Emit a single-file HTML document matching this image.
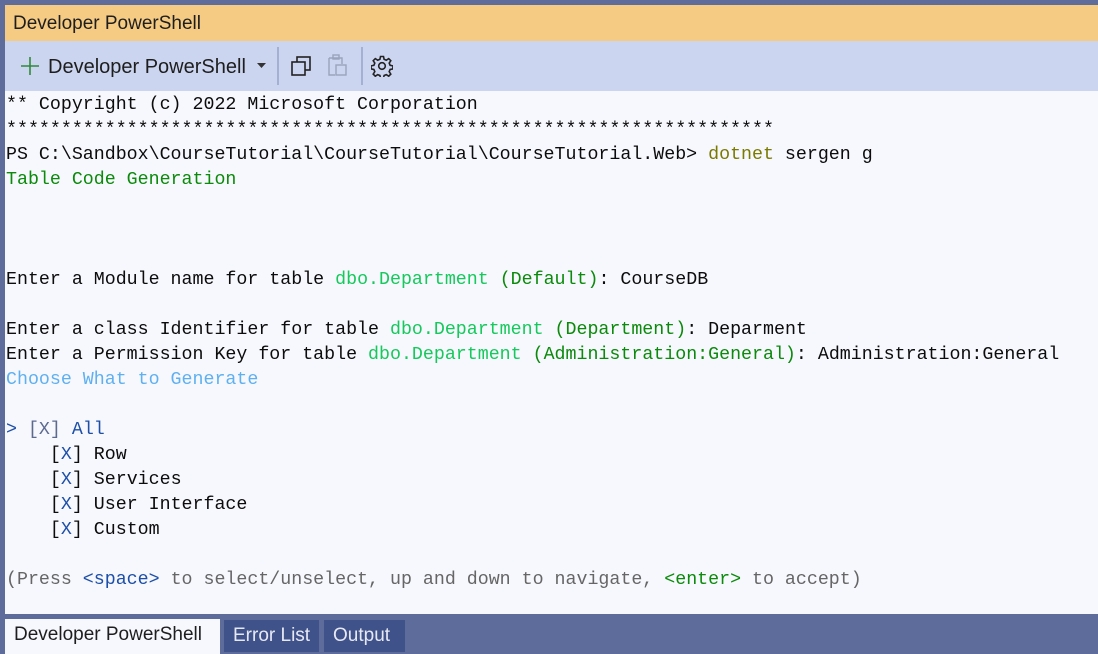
<!DOCTYPE html>
<html><head><meta charset="utf-8"><style>
*{margin:0;padding:0;box-sizing:border-box}
html,body{width:1098px;height:654px;overflow:hidden}
body{background:#5d6c9b;position:relative;font-family:"Liberation Sans",sans-serif}
#title{position:absolute;left:5px;top:5px;width:1093px;height:36px;background:#f5cb83;font-size:19px;color:#1e1e1e;padding:8px 0 0 8px;white-space:nowrap}
#tb{position:absolute;left:5px;top:41px;width:1093px;height:50px;background:#ccd5f0}
#term{position:absolute;left:5px;top:91px;width:1093px;height:523px;background:#f7f8fd}
pre{font-family:"Liberation Mono",monospace;font-size:18.3px;line-height:25px;color:#0c0c0c;position:absolute;left:1px;top:2px}
.ol{color:#7a7a00}.dg{color:#0b8a0b}.bg{color:#16c95c}.lb{color:#5fb0f0}.b{color:#1d4fa8}.gr{color:#666}.gb{color:#5c6a90}
.tab{position:absolute;top:620px;height:32px;font-size:19px;padding:5px 9px 0;white-space:nowrap;overflow:hidden}
</style></head><body>
<div id="title">Developer PowerShell</div>
<div id="tb">
<svg style="position:absolute;left:14px;top:14px" width="22" height="22"><path d="M11 2V20M2 11H20" stroke="#2f8a3a" stroke-width="1.6"/></svg>
<span style="position:absolute;left:43px;top:15px;font-size:20px;color:#1e1e1e;white-space:nowrap">Developer PowerShell</span>
<svg style="position:absolute;left:252px;top:22px" width="10" height="6"><path d="M0 0H9L4.5 5Z" fill="#333"/></svg>
<div style="position:absolute;left:272px;top:6px;width:2px;height:38px;background:#a3b0d3"></div>
<svg style="position:absolute;left:285px;top:14px" width="24" height="22"><rect x="7" y="2" width="13" height="13" fill="none" stroke="#222" stroke-width="1.6"/><rect x="2" y="7" width="13" height="13" fill="#ccd5f0" stroke="#222" stroke-width="1.6"/></svg>
<svg style="position:absolute;left:321px;top:12px" width="24" height="26"><path d="M3 5H16V11M3 5V22H9" fill="none" stroke="#9aa3bb" stroke-width="1.4"/><rect x="7" y="2" width="6" height="4" fill="none" stroke="#9aa3bb" stroke-width="1.4"/><rect x="10" y="12" width="10" height="10" fill="none" stroke="#9aa3bb" stroke-width="1.4"/></svg>
<div style="position:absolute;left:356px;top:6px;width:2px;height:38px;background:#a3b0d3"></div>
<svg style="position:absolute;left:366px;top:14px" width="22" height="22" viewBox="0 0 22 22"><path d="M9.5 1.5h3l.6 2.8 2.2.9 2.4-1.6 2.1 2.1-1.6 2.4.9 2.2 2.8.6v3l-2.8.6-.9 2.2 1.6 2.4-2.1 2.1-2.4-1.6-2.2.9-.6 2.8h-3l-.6-2.8-2.2-.9-2.4 1.6-2.1-2.1 1.6-2.4-.9-2.2-2.8-.6v-3l2.8-.6.9-2.2-1.6-2.4 2.1-2.1 2.4 1.6 2.2-.9z" fill="none" stroke="#222" stroke-width="1.6"/><circle cx="11" cy="11" r="3.3" fill="none" stroke="#222" stroke-width="1.6"/></svg>
</div>
<div id="term"><pre>** Copyright (c) 2022 Microsoft Corporation
**********************************************************************
PS C:\Sandbox\CourseTutorial\CourseTutorial\CourseTutorial.Web&gt; <span class="ol">dotnet</span> sergen g
<span class="dg">Table Code Generation</span>



Enter a Module name for table <span class="bg">dbo.Department</span> <span class="dg">(Default)</span>: CourseDB

Enter a class Identifier for table <span class="bg">dbo.Department</span> <span class="dg">(Department)</span>: Deparment
Enter a Permission Key for table <span class="bg">dbo.Department</span> <span class="dg">(Administration:General)</span>: Administration:General
<span class="lb">Choose What to Generate</span>

<span class="b">&gt; </span><span class="gb">[X]</span><span class="b"> All</span>
    [<span class="b">X</span>] Row
    [<span class="b">X</span>] Services
    [<span class="b">X</span>] User Interface
    [<span class="b">X</span>] Custom

<span class="gr">(Press </span><span class="b">&lt;space&gt;</span><span class="gr"> to select/unselect, up and down to navigate, </span><span class="dg">&lt;enter&gt;</span><span class="gr"> to accept)</span></pre></div>
<div class="tab" style="left:5px;top:619px;height:35px;width:215px;background:#f7f8fd;color:#1e1e1e">Developer PowerShell</div>
<div class="tab" style="left:224px;width:95px;background:#40528a;color:#e6e9f3">Error List</div>
<div class="tab" style="left:324px;width:81px;background:#40528a;color:#e6e9f3">Output</div>
</body></html>
